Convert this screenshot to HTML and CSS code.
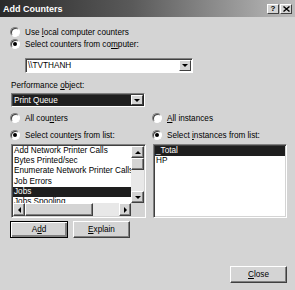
FILE: index.html
```html
<!DOCTYPE html>
<html lang="en">
<head>
    <meta charset="UTF-8">
    <title>Add Counters</title>
    <link rel="stylesheet" href="styles.css">
</head>
<body>
    <div class="window">
        <div class="titlebar">
            <span class="title">Add Counters</span>
            <span class="tb-btn">?</span>
            <span class="tb-btn">
                <svg width="7" height="6" viewBox="0 0 7 6"><path d="M0.5 0.5L6.5 5.5M6.5 0.5L0.5 5.5" stroke="#000" stroke-width="1.4"/></svg>
            </span>
        </div>

        <div class="content">
            <div class="opt first"><span class="radio"></span><span>Use <u>l</u>ocal computer counters</span></div>
            <div class="opt"><span class="radio checked"></span><span>Select counters from co<u>m</u>puter:</span></div>

            <div class="combo computer">
                <div class="field">\\TVTHANH</div>
                <div class="drop"><span class="tri down"></span></div>
            </div>

            <div class="label"><span>Performance <u>o</u>bject:</span></div>
            <div class="combo object">
                <div class="field focus">Print Queue</div>
                <div class="drop"><span class="tri down"></span></div>
            </div>

            <div class="columns">
                <div class="col">
                    <div class="opt"><span class="radio"></span><span>All cou<u>n</u>ters</span></div>
                    <div class="opt second"><span class="radio checked"></span><span>Select counte<u>r</u>s from list:</span></div>
                    <div class="list scrolled">
                        <div class="items">
                            <div class="item">Add Network Printer Calls</div>
                            <div class="item">Bytes Printed/sec</div>
                            <div class="item">Enumerate Network Printer Calls</div>
                            <div class="item">Job Errors</div>
                            <div class="item sel">Jobs</div>
                            <div class="item">Jobs Spooling</div>
                        </div>
                        <div class="vscroll">
                            <div class="sbtn"><span class="tri up"></span></div>
                            <div class="thumb"></div>
                            <div class="track"></div>
                            <div class="sbtn"><span class="tri down"></span></div>
                        </div>
                        <div class="hscroll">
                            <div class="sbtn"><span class="tri left"></span></div>
                            <div class="thumb"></div>
                            <div class="track"></div>
                            <div class="sbtn"><span class="tri right"></span></div>
                        </div>
                        <div class="corner"></div>
                    </div>
                </div>
                <div class="col">
                    <div class="opt"><span class="radio"></span><span><u>A</u>ll instances</span></div>
                    <div class="opt second"><span class="radio checked"></span><span>Select <u>i</u>nstances from list:</span></div>
                    <div class="list">
                        <div class="items">
                            <div class="item sel">_Total</div>
                            <div class="item">HP</div>
                        </div>
                    </div>
                </div>
            </div>

            <div class="buttons">
                <button class="btn default">A<u>d</u>d</button>
                <button class="btn"><u>E</u>xplain</button>
            </div>

            <div class="footer">
                <button class="btn"><u>C</u>lose</button>
            </div>
        </div>
    </div>
</body>
</html>
```

FILE: styles.css
```css
* {
    margin: 0;
    padding: 0;
    box-sizing: border-box;
}

body {
    font-family: "Liberation Sans", Arial, sans-serif;
    font-size: 8.2px;
    color: #000;
    background: #d4d4d4;
}

.window {
    width: 295px;
    height: 290px;
    background: #d4d4d4;
}

/* title bar */
.titlebar {
    height: 17px;
    display: flex;
    align-items: center;
    gap: 1px;
    padding: 0 3px 0 3px;
    background: linear-gradient(to right, #2a2a2a, #5a5a5a 45%, #bcbcbc);
}

.title {
    flex: 1;
    color: #fff;
    font-weight: bold;
    font-size: 9px;
}

.tb-btn {
    width: 12px;
    height: 10px;
    display: flex;
    align-items: center;
    justify-content: center;
    background: #d4d4d4;
    border: 1px solid;
    border-color: #fff #404040 #404040 #fff;
    font-weight: bold;
    font-size: 8px;
}

/* body */
.content {
    padding: 0 8px 0 11px;
}

.opt {
    height: 12px;
    display: flex;
    align-items: center;
    gap: 5px;
    white-space: nowrap;
}

.opt.first {
    margin-top: 9px;
}

.opt.second {
    margin-top: 5px;
}

.radio {
    width: 10px;
    height: 10px;
    flex: none;
    margin-left: -1px;
    border-radius: 50%;
    border: 1px solid;
    border-color: #808080 #fff #fff #808080;
    background: #fff;
    box-shadow: inset 1px 1px #404040;
    display: flex;
    align-items: center;
    justify-content: center;
}

.radio.checked::after {
    content: "";
    width: 4px;
    height: 4px;
    border-radius: 50%;
    background: #000;
}

.label {
    height: 12px;
    margin-top: 6px;
    display: flex;
    align-items: center;
}

/* combo boxes */
.combo {
    display: flex;
    border: 1px solid;
    border-color: #808080 #fff #fff #808080;
    box-shadow: inset 1px 1px #404040;
    background: #fff;
    padding: 1px 1px 1px 1px;
}

.combo.computer {
    margin-top: 8px;
    margin-left: 14px;
    width: 168px;
    height: 15px;
}

.combo.object {
    margin-top: 2px;
    width: 134px;
    height: 14px;
    background: #222;
}

.field {
    flex: 1;
    display: flex;
    align-items: center;
    padding-left: 1px;
    white-space: nowrap;
}

.field.focus {
    color: #fff;
    background: #1e1e1e;
}

.drop {
    width: 12px;
    flex: none;
    display: flex;
    align-items: center;
    justify-content: center;
    background: #d4d4d4;
    border: 1px solid;
    border-color: #fff #404040 #404040 #fff;
}

.tri {
    width: 0;
    height: 0;
    border-style: solid;
}

.tri.down {
    border-width: 3px 3px 0 3px;
    border-color: #000 transparent transparent transparent;
}

.tri.up {
    border-width: 0 3px 3px 3px;
    border-color: transparent transparent #000 transparent;
}

.tri.left {
    border-width: 3px 3px 3px 0;
    border-color: transparent #000 transparent transparent;
}

.tri.right {
    border-width: 3px 0 3px 3px;
    border-color: transparent transparent transparent #000;
}

/* two columns */
.columns {
    margin-top: 5px;
    display: grid;
    grid-template-columns: 135px 134px;
    gap: 7px;
}

.list {
    margin-top: 3px;
    height: 74px;
    border: 1px solid;
    border-color: #808080 #fff #fff #808080;
    box-shadow: inset 1px 1px #404040, inset -1px -1px #d4d4d4;
    background: #fff;
    padding: 1px;
    display: grid;
    grid-template-columns: 1fr;
    grid-template-rows: 1fr;
}

.list.scrolled {
    grid-template-columns: 1fr 13px;
    grid-template-rows: 1fr 13px;
}

.items {
    overflow: hidden;
    min-width: 0;
}

.item {
    height: 10.2px;
    line-height: 10.2px;
    padding-left: 1px;
    white-space: nowrap;
}

.item.sel {
    background: #1e1e1e;
    color: #fff;
}

.vscroll {
    display: grid;
    grid-template-rows: 12px 12px 1fr 12px;
}

.hscroll {
    display: grid;
    grid-template-columns: 12px 68px 1fr 12px;
}

.sbtn,
.thumb {
    display: flex;
    align-items: center;
    justify-content: center;
    background: #d4d4d4;
    border: 1px solid;
    border-color: #fff #404040 #404040 #fff;
    box-shadow: inset -1px -1px #808080;
}

.track {
    background: #e8e8e8;
}

.corner {
    background: #d4d4d4;
}

/* buttons */
.buttons {
    margin-top: 3px;
    margin-left: -1px;
    display: flex;
    gap: 5px;
}

.btn {
    width: 57px;
    height: 17px;
    font-family: inherit;
    font-size: 8.2px;
    color: #000;
    background: #d4d4d4;
    border: 1px solid;
    border-color: #fff #404040 #404040 #fff;
    box-shadow: inset -1px -1px #808080;
}

.btn.default {
    width: 58px;
    border-color: #000;
    box-shadow: inset 1px 1px #fff, inset -2px -2px #808080;
}

.footer {
    margin-top: 28px;
    display: flex;
    justify-content: flex-end;
}
```
